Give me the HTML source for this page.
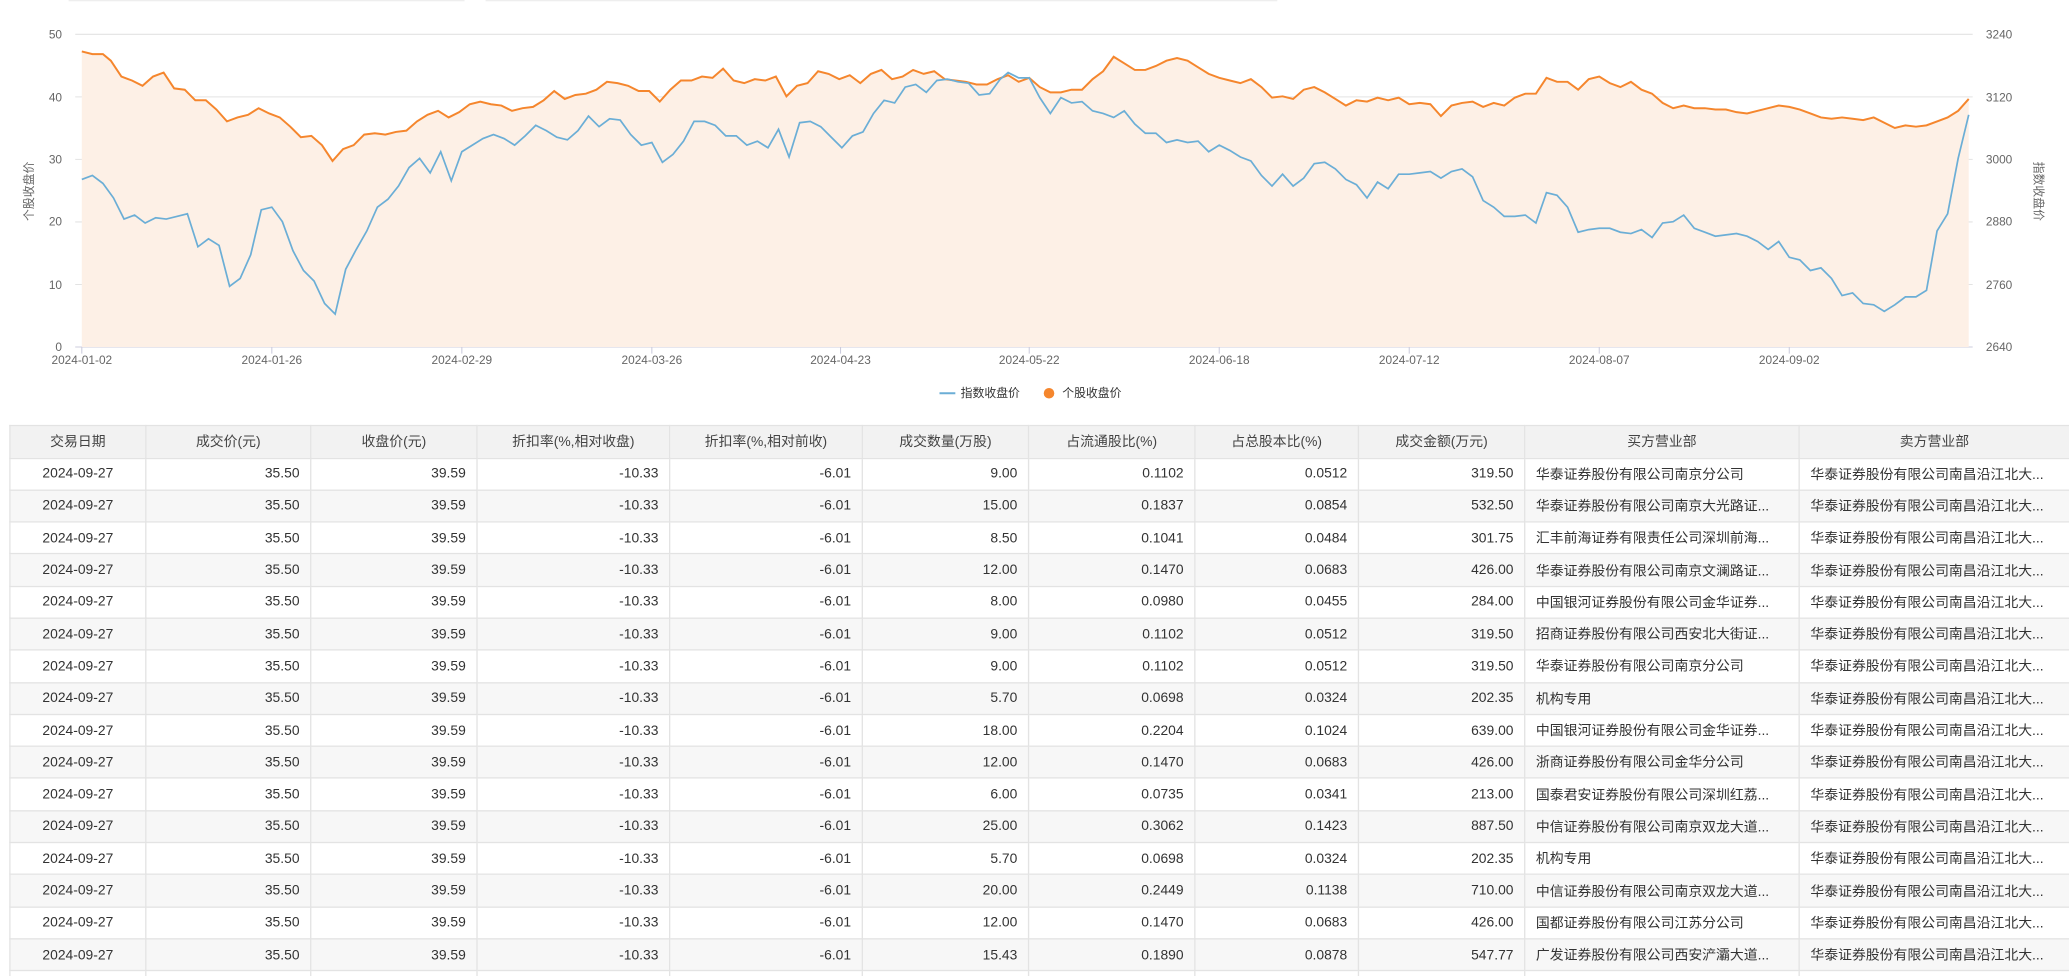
<!DOCTYPE html>
<html><head><meta charset="utf-8"><style>
html,body{margin:0;padding:0;background:#fff;width:2069px;height:976px;overflow:hidden}
#w{width:1568px;height:740px;transform:scale(1.31952);transform-origin:0 0;position:relative;font-family:"Liberation Sans","Noto Sans CJK SC",sans-serif}
table{position:absolute;left:7px;top:322px;border-collapse:collapse;table-layout:fixed;width:1561px;font-size:10.5px;color:#333}
td,th{border:1px solid #e3e3e3;height:23.3px;padding:0 8px;white-space:nowrap;overflow:hidden;text-overflow:ellipsis}
th{background:#f2f2f2;font-weight:normal;height:23.5px;color:#444}
td{text-align:right}
td.c{text-align:center}td.l{text-align:left}
tr:nth-child(odd) td{background:#f7f7f7}
</style></head><body><div id="w">
<div style="position:absolute;left:52px;top:0;width:300px;height:1px;background:#eee"></div>
<div style="position:absolute;left:368px;top:0;width:600px;height:1px;background:#eee"></div>
<svg width="1568" height="320" style="position:absolute;left:0;top:0" font-family="Liberation Sans,Noto Sans CJK SC,sans-serif" font-size="9" fill="#666">
<g stroke="#e3e3e3" stroke-width="0.8">
<line x1="57" x2="1495" y1="26" y2="26"/><line x1="57" x2="1495" y1="73.4" y2="73.4"/><line x1="57" x2="1495" y1="120.8" y2="120.8"/><line x1="57" x2="1495" y1="168.2" y2="168.2"/><line x1="57" x2="1495" y1="215.6" y2="215.6"/></g>
<line x1="57" x2="1495" y1="263" y2="263" stroke="#ccd" stroke-width="0.8"/>
<g stroke="#ccd" stroke-width="0.8"><line x1="62" x2="62" y1="263" y2="268"/><line x1="206" x2="206" y1="263" y2="268"/><line x1="350" x2="350" y1="263" y2="268"/><line x1="494" x2="494" y1="263" y2="268"/><line x1="637" x2="637" y1="263" y2="268"/><line x1="780" x2="780" y1="263" y2="268"/><line x1="924" x2="924" y1="263" y2="268"/><line x1="1068" x2="1068" y1="263" y2="268"/><line x1="1212" x2="1212" y1="263" y2="268"/><line x1="1356" x2="1356" y1="263" y2="268"/></g>
<g text-anchor="end"><text x="47" y="29">50</text><text x="47" y="77">40</text><text x="47" y="124">30</text><text x="47" y="171">20</text><text x="47" y="219">10</text><text x="47" y="266">0</text></g>
<g><text x="1505" y="29">3240</text><text x="1505" y="77">3120</text><text x="1505" y="124">3000</text><text x="1505" y="171">2880</text><text x="1505" y="219">2760</text><text x="1505" y="266">2640</text></g>
<g text-anchor="middle"><text x="62" y="276">2024-01-02</text><text x="206" y="276">2024-01-26</text><text x="350" y="276">2024-02-29</text><text x="494" y="276">2024-03-26</text><text x="637" y="276">2024-04-23</text><text x="780" y="276">2024-05-22</text><text x="924" y="276">2024-06-18</text><text x="1068" y="276">2024-07-12</text><text x="1212" y="276">2024-08-07</text><text x="1356" y="276">2024-09-02</text></g>
<text transform="translate(25,145) rotate(-90)" text-anchor="middle">个股收盘价</text>
<text transform="translate(1542,145) rotate(90)" text-anchor="middle">指数收盘价</text>
<polygon fill="#fdf0e6" points="62,263 62,39 70,41 78,41 84,46 92,58 100,61 108,65 116,58 124,55 132,67 140,68 148,76 156,76 164,83 172,92 180,89 188,87 196,82 204,86 212,89 220,96 228,104 236,103 244,110 252,122 260,113 268,110 276,102 284,101 292,102 300,100 308,99 316,92 324,87 332,84 340,89 348,85 356,79 364,77 372,79 380,80 388,84 396,82 404,81 412,76 420,69 428,75 436,72 444,71 452,68 460,62 468,63 476,65 484,69 492,69 500,77 508,68 516,61 524,61 532,58 540,59 548,52 556,61 564,63 572,60 580,61 588,58 596,73 604,65 612,63 620,54 628,56 636,60 644,57 652,63 660,56 668,53 676,60 684,58 692,53 700,56 708,54 716,60 724,61 732,62 740,64 748,64 756,60 764,57 772,62 780,59 788,66 796,70 804,70 812,68 820,68 828,60 836,54 844,43 852,48 860,53 868,53 876,50 884,46 892,44 900,46 908,51 916,56 924,59 932,61 940,63 948,60 956,66 964,74 972,73 980,75 988,68 996,66 1004,70 1012,75 1020,80 1028,76 1036,77 1044,74 1052,76 1060,74 1068,79 1076,78 1084,79 1092,88 1100,80 1108,78 1116,77 1124,81 1132,78 1140,80 1148,74 1156,71 1164,71 1172,59 1180,62 1188,62 1196,68 1204,60 1212,58 1220,63 1228,66 1236,62 1244,68 1252,71 1260,78 1268,82 1276,80 1284,82 1292,82 1300,83 1308,83 1316,85 1324,86 1332,84 1340,82 1348,80 1356,81 1364,83 1372,86 1380,89 1388,90 1396,89 1404,90 1412,91 1420,89 1428,93 1436,97 1444,95 1452,96 1460,95 1468,92 1476,89 1484,84 1492,75 1492,263"/>
<polyline fill="none" stroke="#f5862d" stroke-width="1.5" points="62,39 70,41 78,41 84,46 92,58 100,61 108,65 116,58 124,55 132,67 140,68 148,76 156,76 164,83 172,92 180,89 188,87 196,82 204,86 212,89 220,96 228,104 236,103 244,110 252,122 260,113 268,110 276,102 284,101 292,102 300,100 308,99 316,92 324,87 332,84 340,89 348,85 356,79 364,77 372,79 380,80 388,84 396,82 404,81 412,76 420,69 428,75 436,72 444,71 452,68 460,62 468,63 476,65 484,69 492,69 500,77 508,68 516,61 524,61 532,58 540,59 548,52 556,61 564,63 572,60 580,61 588,58 596,73 604,65 612,63 620,54 628,56 636,60 644,57 652,63 660,56 668,53 676,60 684,58 692,53 700,56 708,54 716,60 724,61 732,62 740,64 748,64 756,60 764,57 772,62 780,59 788,66 796,70 804,70 812,68 820,68 828,60 836,54 844,43 852,48 860,53 868,53 876,50 884,46 892,44 900,46 908,51 916,56 924,59 932,61 940,63 948,60 956,66 964,74 972,73 980,75 988,68 996,66 1004,70 1012,75 1020,80 1028,76 1036,77 1044,74 1052,76 1060,74 1068,79 1076,78 1084,79 1092,88 1100,80 1108,78 1116,77 1124,81 1132,78 1140,80 1148,74 1156,71 1164,71 1172,59 1180,62 1188,62 1196,68 1204,60 1212,58 1220,63 1228,66 1236,62 1244,68 1252,71 1260,78 1268,82 1276,80 1284,82 1292,82 1300,83 1308,83 1316,85 1324,86 1332,84 1340,82 1348,80 1356,81 1364,83 1372,86 1380,89 1388,90 1396,89 1404,90 1412,91 1420,89 1428,93 1436,97 1444,95 1452,96 1460,95 1468,92 1476,89 1484,84 1492,75"/>
<polyline fill="none" stroke="#6baed6" stroke-width="1.3" points="62,136 70,133 78,139 86,150 94,166 102,163 110,169 118,165 126,166 134,164 142,162 150,187 158,181 166,186 174,217 182,211 190,193 198,159 206,157 214,168 222,190 230,205 238,213 246,230 254,238 262,204 270,189 278,175 286,157 294,151 302,141 310,127 318,120 326,131 334,115 342,137 350,115 358,110 366,105 374,102 382,105 390,110 398,103 406,95 414,99 422,104 430,106 438,99 446,88 454,96 462,90 470,91 478,102 486,110 494,108 502,123 510,117 518,107 526,92 534,92 542,95 550,103 558,103 566,110 574,107 582,112 590,98 598,119 606,93 614,92 622,96 630,104 638,112 646,103 654,100 662,86 670,76 678,78 686,66 694,64 702,70 710,61 718,60 726,62 734,63 742,72 750,71 758,60 764,55 772,59 780,59 788,74 796,86 804,74 812,78 820,77 828,84 836,86 844,89 852,84 860,94 868,101 876,101 884,108 892,106 900,108 908,107 916,115 924,110 932,114 940,119 948,122 956,133 964,141 972,132 980,141 988,135 996,124 1004,123 1012,128 1020,136 1028,140 1036,150 1044,138 1052,143 1060,132 1068,132 1076,131 1084,130 1092,135 1100,130 1108,128 1116,134 1124,152 1132,157 1140,164 1148,164 1156,163 1164,169 1172,146 1180,148 1188,157 1196,176 1204,174 1212,173 1220,173 1228,176 1236,177 1244,174 1252,180 1260,169 1268,168 1276,163 1284,173 1292,176 1300,179 1308,178 1316,177 1324,179 1332,183 1340,189 1348,183 1356,195 1364,197 1372,205 1380,203 1388,211 1396,224 1404,222 1412,230 1420,231 1428,236 1436,231 1444,225 1452,225 1460,220 1468,175 1476,162 1484,120 1492,87"/>
<line x1="712" x2="724" y1="298" y2="298" stroke="#6baed6" stroke-width="1.5"/>
<text x="728" y="301" fill="#333">指数收盘价</text>
<circle cx="795" cy="298" r="4" fill="#f5862d"/>
<text x="805" y="301" fill="#333">个股收盘价</text>
</svg>
<table>
<colgroup><col style="width:103px"><col style="width:125px"><col style="width:126px"><col style="width:146px"><col style="width:146px"><col style="width:126px"><col style="width:126px"><col style="width:124px"><col style="width:126px"><col style="width:208px"><col style="width:205px"></colgroup>
<tr><th>交易日期</th><th>成交价(元)</th><th>收盘价(元)</th><th>折扣率(%,相对收盘)</th><th>折扣率(%,相对前收)</th><th>成交数量(万股)</th><th>占流通股比(%)</th><th>占总股本比(%)</th><th>成交金额(万元)</th><th>买方营业部</th><th>卖方营业部</th></tr>
<tr><td class="c">2024-09-27</td><td>35.50</td><td>39.59</td><td>-10.33</td><td>-6.01</td><td>9.00</td><td>0.1102</td><td>0.0512</td><td>319.50</td><td class="l">华泰证券股份有限公司南京分公司</td><td class="l">华泰证券股份有限公司南昌沿江北大...</td></tr>
<tr><td class="c">2024-09-27</td><td>35.50</td><td>39.59</td><td>-10.33</td><td>-6.01</td><td>15.00</td><td>0.1837</td><td>0.0854</td><td>532.50</td><td class="l">华泰证券股份有限公司南京大光路证...</td><td class="l">华泰证券股份有限公司南昌沿江北大...</td></tr>
<tr><td class="c">2024-09-27</td><td>35.50</td><td>39.59</td><td>-10.33</td><td>-6.01</td><td>8.50</td><td>0.1041</td><td>0.0484</td><td>301.75</td><td class="l">汇丰前海证券有限责任公司深圳前海...</td><td class="l">华泰证券股份有限公司南昌沿江北大...</td></tr>
<tr><td class="c">2024-09-27</td><td>35.50</td><td>39.59</td><td>-10.33</td><td>-6.01</td><td>12.00</td><td>0.1470</td><td>0.0683</td><td>426.00</td><td class="l">华泰证券股份有限公司南京文澜路证...</td><td class="l">华泰证券股份有限公司南昌沿江北大...</td></tr>
<tr><td class="c">2024-09-27</td><td>35.50</td><td>39.59</td><td>-10.33</td><td>-6.01</td><td>8.00</td><td>0.0980</td><td>0.0455</td><td>284.00</td><td class="l">中国银河证券股份有限公司金华证券...</td><td class="l">华泰证券股份有限公司南昌沿江北大...</td></tr>
<tr><td class="c">2024-09-27</td><td>35.50</td><td>39.59</td><td>-10.33</td><td>-6.01</td><td>9.00</td><td>0.1102</td><td>0.0512</td><td>319.50</td><td class="l">招商证券股份有限公司西安北大街证...</td><td class="l">华泰证券股份有限公司南昌沿江北大...</td></tr>
<tr><td class="c">2024-09-27</td><td>35.50</td><td>39.59</td><td>-10.33</td><td>-6.01</td><td>9.00</td><td>0.1102</td><td>0.0512</td><td>319.50</td><td class="l">华泰证券股份有限公司南京分公司</td><td class="l">华泰证券股份有限公司南昌沿江北大...</td></tr>
<tr><td class="c">2024-09-27</td><td>35.50</td><td>39.59</td><td>-10.33</td><td>-6.01</td><td>5.70</td><td>0.0698</td><td>0.0324</td><td>202.35</td><td class="l">机构专用</td><td class="l">华泰证券股份有限公司南昌沿江北大...</td></tr>
<tr><td class="c">2024-09-27</td><td>35.50</td><td>39.59</td><td>-10.33</td><td>-6.01</td><td>18.00</td><td>0.2204</td><td>0.1024</td><td>639.00</td><td class="l">中国银河证券股份有限公司金华证券...</td><td class="l">华泰证券股份有限公司南昌沿江北大...</td></tr>
<tr><td class="c">2024-09-27</td><td>35.50</td><td>39.59</td><td>-10.33</td><td>-6.01</td><td>12.00</td><td>0.1470</td><td>0.0683</td><td>426.00</td><td class="l">浙商证券股份有限公司金华分公司</td><td class="l">华泰证券股份有限公司南昌沿江北大...</td></tr>
<tr><td class="c">2024-09-27</td><td>35.50</td><td>39.59</td><td>-10.33</td><td>-6.01</td><td>6.00</td><td>0.0735</td><td>0.0341</td><td>213.00</td><td class="l">国泰君安证券股份有限公司深圳红荔...</td><td class="l">华泰证券股份有限公司南昌沿江北大...</td></tr>
<tr><td class="c">2024-09-27</td><td>35.50</td><td>39.59</td><td>-10.33</td><td>-6.01</td><td>25.00</td><td>0.3062</td><td>0.1423</td><td>887.50</td><td class="l">中信证券股份有限公司南京双龙大道...</td><td class="l">华泰证券股份有限公司南昌沿江北大...</td></tr>
<tr><td class="c">2024-09-27</td><td>35.50</td><td>39.59</td><td>-10.33</td><td>-6.01</td><td>5.70</td><td>0.0698</td><td>0.0324</td><td>202.35</td><td class="l">机构专用</td><td class="l">华泰证券股份有限公司南昌沿江北大...</td></tr>
<tr><td class="c">2024-09-27</td><td>35.50</td><td>39.59</td><td>-10.33</td><td>-6.01</td><td>20.00</td><td>0.2449</td><td>0.1138</td><td>710.00</td><td class="l">中信证券股份有限公司南京双龙大道...</td><td class="l">华泰证券股份有限公司南昌沿江北大...</td></tr>
<tr><td class="c">2024-09-27</td><td>35.50</td><td>39.59</td><td>-10.33</td><td>-6.01</td><td>12.00</td><td>0.1470</td><td>0.0683</td><td>426.00</td><td class="l">国都证券股份有限公司江苏分公司</td><td class="l">华泰证券股份有限公司南昌沿江北大...</td></tr>
<tr><td class="c">2024-09-27</td><td>35.50</td><td>39.59</td><td>-10.33</td><td>-6.01</td><td>15.43</td><td>0.1890</td><td>0.0878</td><td>547.77</td><td class="l">广发证券股份有限公司西安浐灞大道...</td><td class="l">华泰证券股份有限公司南昌沿江北大...</td></tr>
<tr><td class="c">2024-09-27</td><td>35.50</td><td>39.59</td><td>-10.33</td><td>-6.01</td><td>9.00</td><td>0.1102</td><td>0.0512</td><td>319.50</td><td class="l">华泰证券股份有限公司南京分公司</td><td class="l">华泰证券股份有限公司南昌沿江北大...</td></tr>
</table>
</div></body></html>
